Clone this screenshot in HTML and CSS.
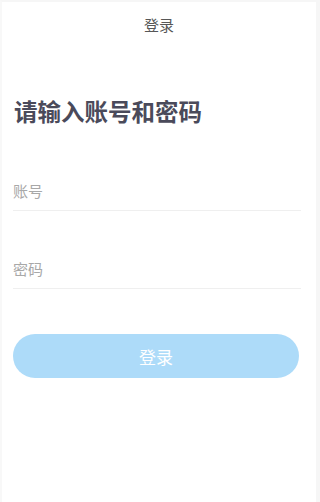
FILE: index.html
```html
<!DOCTYPE html>
<html lang="zh-CN">
<head>
<meta charset="utf-8">
<title>登录</title>
<link rel="stylesheet" href="styles.css">
</head>
<body>
<div class="page">
  <header class="topbar">登录</header>
  <main class="content">
    <h1 class="heading">请输入账号和密码</h1>
    <div class="field field-first"><span class="placeholder">账号</span></div>
    <div class="field field-second"><span class="placeholder">密码</span></div>
    <button class="login-btn" type="button">登录</button>
  </main>
</div>
</body>
</html>
```

FILE: styles.css
```css
html, body {
  margin: 0;
  padding: 0;
  background: #ffffff;
}
body {
  font-family: "Noto Sans CJK SC", "Noto Sans", sans-serif;
  width: 320px;
  height: 502px;
  overflow: hidden;
}
.page {
  height: 502px;
  box-sizing: border-box;
  border-right: 4px solid #f6f6f6;
  border-top: 2px solid #f6f6f6;
  border-left: 2px solid #f8f8f8;
}
.topbar {
  height: 45px;
  line-height: 45px;
  text-align: center;
  font-size: 15px;
  color: #575757;
}
.content {
  padding: 0 15px 0 11px;
}
.heading {
  margin: 52px 0 0 1px;
  font-size: 23.5px;
  line-height: 24px;
  font-weight: 700;
  color: #4a4a5a;
}
.field {
  border-bottom: 1px solid #efefef;
  padding-bottom: 9px;
}
.field-first {
  margin-top: 58px;
}
.field-second {
  margin-top: 48px;
}
.placeholder {
  display: block;
  font-size: 15px;
  line-height: 20px;
  color: #a8a8a8;
}
.login-btn {
  display: block;
  width: 286px;
  height: 44px;
  margin: 45px 0 0 0;
  border: none;
  border-radius: 22px;
  background: #addbf9;
  color: #ffffff;
  font-family: "Noto Sans CJK SC", "Noto Sans", sans-serif;
  font-size: 17px;
  padding: 0;
}
```
